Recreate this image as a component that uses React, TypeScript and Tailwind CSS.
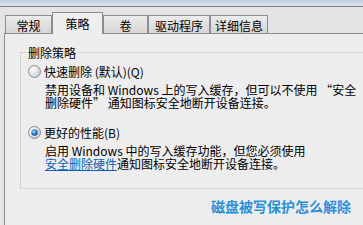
import React from "react";

const tabs = [
	{ label: "常规", w: 47 },
	{ label: "策略", w: 51, active: true },
	{ label: "卷", w: 45 },
	{ label: "驱动程序", w: 62 },
	{ label: "详细信息", w: 58 },
];

function Radio({ checked }: { checked?: boolean }) {
	return (
		<svg width="13" height="13" viewBox="0 0 13 13" className="shrink-0">
			<defs>
				<radialGradient id={checked ? "rg1" : "rg0"} cx="0.35" cy="0.35" r="0.7">
					<stop offset="0" stopColor="#ffffff" />
					<stop offset="1" stopColor="#c9ccd1" />
				</radialGradient>
				<radialGradient id="dot" cx="0.4" cy="0.35" r="0.7">
					<stop offset="0" stopColor="#a6d8f7" />
					<stop offset="0.6" stopColor="#2b73c4" />
					<stop offset="1" stopColor="#123f7a" />
				</radialGradient>
			</defs>
			<circle cx="6.5" cy="6.5" r="6" fill={`url(#${checked ? "rg1" : "rg0"})`} stroke="#8e8f8f" />
			{checked && <circle cx="6.5" cy="6.5" r="3.2" fill="url(#dot)" />}
		</svg>
	);
}

export default function App() {
	return (
		<div
			className="flex h-[225px] w-[363px] flex-col overflow-hidden bg-[#e4e4e4] text-[12px] leading-[13px] text-black"
			style={{ fontFamily: '"Noto Sans CJK SC", "Noto Sans", sans-serif' }}
		>
			{/* window frame strip */}
			<div className="h-[7px] shrink-0 border-b border-[#77828e] bg-gradient-to-b from-[#bfd2e6] to-[#dde3ea]" />

			{/* tabs */}
			<div className="flex h-[26px] shrink-0 items-end pl-[5px]">
				{tabs.map((t) =>
					t.active ? (
						<div
							key={t.label}
							style={{ width: t.w }}
							className="relative z-10 -mb-px flex h-[22px] items-start justify-center border-x border-t border-[#8c8e94] bg-[#eeeeee] pt-[4px]"
						>
							{t.label}
						</div>
					) : (
						<div
							key={t.label}
							style={{ width: t.w }}
							className="flex h-[18px] items-center justify-center border-x border-t border-[#8c8e94] bg-gradient-to-b from-[#ececec] to-[#d6d6d6] pt-px"
						>
							{t.label}
						</div>
					),
				)}
			</div>

			{/* panel */}
			<div className="ml-[4px] flex-1 border-l border-t border-[#898c95] bg-[#ededed]">
				<div className="relative ml-[15px] mt-[18px] h-[137px] w-[360px] border border-[#cfd1d3]">
					<span className="absolute -top-[7px] left-[5px] bg-[#ededed] px-[2px]">
						删除策略
					</span>

					<div className="mt-[12px] flex items-center gap-[3px] pl-[7px]">
						<Radio />
						<span>快速删除 (默认)(Q)</span>
					</div>
					<div className="mt-[5px] whitespace-nowrap pl-[24px]">
						<div>禁用设备和 Windows 上的写入缓存，但可以不使用 “安全</div>
						<div>删除硬件” 通知图标安全地断开设备连接。</div>
					</div>

					<div className="mt-[17px] flex items-center gap-[3px] pl-[7px]">
						<Radio checked />
						<span>更好的性能(B)</span>
					</div>
					<div className="mt-[5px] whitespace-nowrap pl-[24px]">
						<div>启用 Windows 中的写入缓存功能，但您必须使用</div>
						<div>
							<span className="text-[#0b62b8] underline underline-offset-1">
								安全删除硬件
							</span>
							通知图标安全地断开设备连接。
						</div>
					</div>
				</div>

				<div className="mt-[9px] flex justify-end pr-[12px]">
					<span className="text-[14px] font-bold leading-[16px] text-[#2a8fd8]">
						磁盘被写保护怎么解除
					</span>
				</div>
			</div>
		</div>
	);
}
